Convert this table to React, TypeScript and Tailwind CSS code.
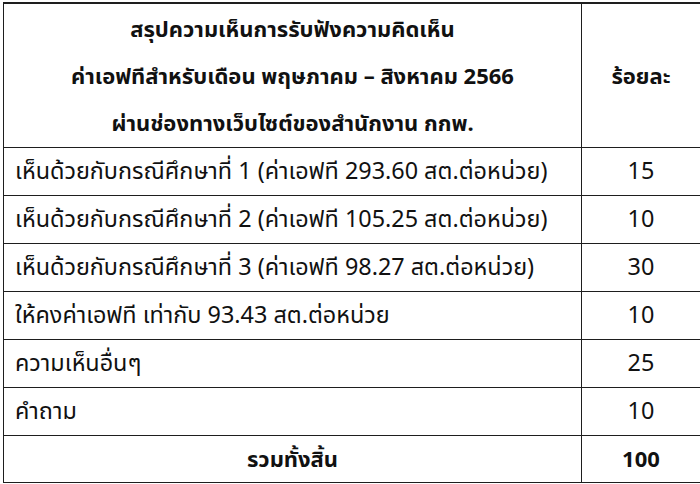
import React from 'react'

const rows = [
  { label: 'เห็นด้วยกับกรณีศึกษาที่ 1 (ค่าเอฟที 293.60 สต.ต่อหน่วย)', value: '15' },
  { label: 'เห็นด้วยกับกรณีศึกษาที่ 2 (ค่าเอฟที 105.25 สต.ต่อหน่วย)', value: '10' },
  { label: 'เห็นด้วยกับกรณีศึกษาที่ 3 (ค่าเอฟที 98.27 สต.ต่อหน่วย)', value: '30' },
  { label: 'ให้คงค่าเอฟที เท่ากับ 93.43 สต.ต่อหน่วย', value: '10' },
  { label: 'ความเห็นอื่นๆ', value: '25' },
  { label: 'คำถาม', value: '10' },
]

export default function App() {
  return (
    <div
      className="w-[700px] h-[484px] overflow-hidden bg-white pt-[2px] pl-[3px] text-[#111]"
      style={{ fontFamily: '"Noto Sans", "Noto Sans Thai", "Liberation Sans", sans-serif' }}
    >
      <table className="w-[702px] border-collapse text-[23.4px]">
        <tbody>
          <tr className="h-[144px]">
            <td className="w-[578px] border border-t-2 border-[#1e1e1e] text-center text-[22px] font-bold leading-[47px]">
              <div>สรุปความเห็นการรับฟังความคิดเห็น</div>
              <div>ค่าเอฟทีสำหรับเดือน พฤษภาคม – สิงหาคม 2566</div>
              <div>ผ่านช่องทางเว็บไซต์ของสำนักงาน กกพ.</div>
            </td>
            <td className="border border-t-2 border-[#1e1e1e] pr-[4px] text-center text-[22px] font-bold">ร้อยละ</td>
          </tr>
          {rows.map((r) => (
            <tr key={r.label} className="h-[48px]">
              <td className="border border-[#1e1e1e] pl-[11px]">{r.label}</td>
              <td className="border border-[#1e1e1e] pr-[4px] text-center">{r.value}</td>
            </tr>
          ))}
          <tr className="h-[47px]">
            <td className="border border-[#1e1e1e] text-center text-[22px] font-bold">รวมทั้งสิ้น</td>
            <td className="border border-[#1e1e1e] pr-[4px] text-center text-[22px] font-bold">100</td>
          </tr>
        </tbody>
      </table>
    </div>
  )
}
